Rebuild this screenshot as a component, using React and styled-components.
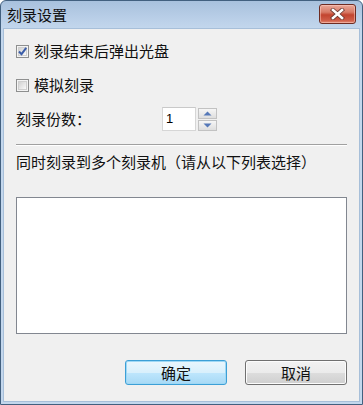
import React from "react";
import styled, { createGlobalStyle } from "styled-components";

const Global = createGlobalStyle`
  html, body { margin: 0; padding: 0; background: #ffffff; }
  body { font-family: "Noto Sans CJK SC", "Noto Sans", sans-serif; }
`;

const Window = styled.div`
  width: 363px;
  height: 405px;
  box-sizing: border-box;
  border: 1px solid #42607f;
  border-radius: 6px 6px 0 0;
  background: linear-gradient(#a8c1dd 0px, #bcd1e9 20px, #c3d7ed 28px, #c3d7ed 100%);
  display: flex;
  flex-direction: column;
  overflow: hidden;
`;

const TitleBar = styled.div`
  height: 27px;
  flex: none;
  display: flex;
  align-items: center;
  justify-content: space-between;
  padding: 0 6px 0 6px;
`;

const Title = styled.div`
  font-size: 15px;
  line-height: 18px;
  color: #111;
`;

const CloseButton = styled.div`
  width: 37px;
  height: 20px;
  box-sizing: border-box;
  border: 1px solid #6e2c22;
  border-radius: 3px;
  background: linear-gradient(#e9a898 0%, #d77a66 40%, #c2442f 55%, #cf5d48 85%, #e28a74 100%);
  box-shadow: inset 0 0 0 1px rgba(255, 210, 200, 0.5);
  display: flex;
  align-items: center;
  justify-content: center;
  margin-top: -2px;
`;

const Content = styled.div`
  flex: 1;
  margin: 0 2px 2px 2px;
  background: #f0f0f0;
  border: 1px solid #a7bfd9;
  padding: 12px 12px 0 12px;
  display: flex;
  flex-direction: column;
  font-size: 15px;
  color: #111;
`;

const CheckRow = styled.label`
  display: flex;
  align-items: center;
  height: 20px;
  gap: 5px;
  margin-top: ${(p) => p.$mt || 0}px;
`;

const Box = styled.span`
  width: 13px;
  height: 13px;
  box-sizing: border-box;
  border: 1px solid #8e8f8f;
  background: #f4f4f4;
  display: flex;
  align-items: center;
  justify-content: center;
  position: relative;
  &::before {
    content: "";
    position: absolute;
    inset: 1px;
    border: 1px solid #cfcfcf;
    background: linear-gradient(135deg, #d2d2d2 0%, #ededed 70%, #fafafa 100%);
  }
`;

const Check = styled.svg`
  position: relative;
  width: 11px;
  height: 11px;
`;

const Label = styled.span`
  line-height: 20px;
  white-space: nowrap;
`;

const CountRow = styled.div`
  display: flex;
  align-items: center;
  height: 24px;
  margin-top: 12px;
`;

const CountLabel = styled.span`
  width: 146px;
  line-height: 20px;
`;

const NumInput = styled.div`
  width: 34px;
  height: 24px;
  box-sizing: border-box;
  border: 1px solid #d6d6d6;
  border-top-color: #c9c9c9;
  background: #fff;
  font-family: "Liberation Sans", Arial, sans-serif;
  font-size: 13px;
  line-height: 22px;
  padding-left: 3px;
  color: #000;
`;

const Spinner = styled.div`
  display: flex;
  flex-direction: column;
  gap: 1px;
  margin-left: 2px;
`;

const SpinButton = styled.div`
  width: 19px;
  height: 11px;
  box-sizing: border-box;
  border: 1px solid #c2c2c2;
  background: linear-gradient(#f6f6f6, #dedede);
  display: flex;
  align-items: center;
  justify-content: center;
`;

const Separator = styled.div`
  height: 1px;
  background: #a0a0a0;
  border-bottom: 1px solid #ffffff;
  margin-top: 13px;
`;

const Caption = styled.div`
  line-height: 20px;
  margin-top: 6px;
  white-space: nowrap;
`;

const ListBox = styled.div`
  height: 137px;
  box-sizing: border-box;
  border: 1px solid #828790;
  background: #fff;
  margin-top: 25px;
`;

const ButtonRow = styled.div`
  display: flex;
  justify-content: flex-end;
  gap: 18px;
  margin-top: 26px;
`;

const Button = styled.div`
  width: 102px;
  height: 25px;
  box-sizing: border-box;
  border: 1px solid ${(p) => (p.$default ? "#3c9fd6" : "#707070")};
  border-radius: 3px;
  background: ${(p) =>
    p.$default
      ? "linear-gradient(#eaf6fd 0%, #d9f0fc 50%, #bee6fd 51%, #a7d9f5 100%)"
      : "linear-gradient(#f2f2f2 0%, #ebebeb 50%, #dddddd 51%, #cfcfcf 100%)"};
  box-shadow: ${(p) =>
    p.$default ? "inset 0 0 0 1px #9fd8f5" : "inset 0 0 0 1px #fcfcfc"};
  display: flex;
  align-items: center;
  justify-content: center;
  font-size: 15px;
  line-height: 20px;
  color: #111;
`;

const CheckMark = () => (
  <Check viewBox="0 0 11 11">
    <path d="M2 5.5 L4.5 8.2 L9.2 1.8" fill="none" stroke="#3b5da8" strokeWidth="2" />
  </Check>
);

const Triangle = ({ up }) => (
  <svg width="9" height="5" viewBox="0 0 9 5">
    <path d={up ? "M0.5 4.5 L4.5 0.5 L8.5 4.5 Z" : "M0.5 0.5 L4.5 4.5 L8.5 0.5 Z"} fill="#5578b8" />
  </svg>
);

export default function App() {
  return (
    <>
      <Global />
      <Window>
        <TitleBar>
          <Title>刻录设置</Title>
          <CloseButton>
            <svg width="15" height="12" viewBox="0 0 15 12">
              <path d="M3 2 L12 10 M12 2 L3 10" stroke="#6a3a33" strokeWidth="4.2" strokeLinecap="square" />
              <path d="M3 2 L12 10 M12 2 L3 10" stroke="#ffffff" strokeWidth="2.6" strokeLinecap="square" />
            </svg>
          </CloseButton>
        </TitleBar>
        <Content>
          <CheckRow $mt={0}>
            <Box>
              <CheckMark />
            </Box>
            <Label>刻录结束后弹出光盘</Label>
          </CheckRow>
          <CheckRow $mt={14}>
            <Box />
            <Label>模拟刻录</Label>
          </CheckRow>
          <CountRow>
            <CountLabel>刻录份数：</CountLabel>
            <NumInput>1</NumInput>
            <Spinner>
              <SpinButton>
                <Triangle up />
              </SpinButton>
              <SpinButton>
                <Triangle />
              </SpinButton>
            </Spinner>
          </CountRow>
          <Separator />
          <Caption>同时刻录到多个刻录机（请从以下列表选择）</Caption>
          <ListBox />
          <ButtonRow>
            <Button $default>确定</Button>
            <Button>取消</Button>
          </ButtonRow>
        </Content>
      </Window>
    </>
  );
}
